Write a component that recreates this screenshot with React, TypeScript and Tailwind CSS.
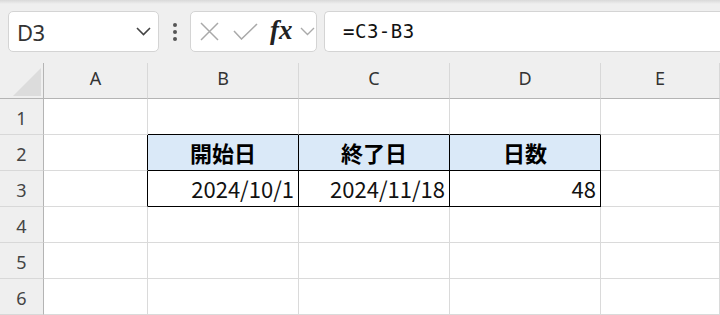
import React from "react";

const cols = ["A", "B", "C", "D", "E"];

function Corner() {
  return (
    <div className="h-[36px] border-r border-b border-r-[#b4b4b4] border-b-[#b4b4b4] bg-[#efefef] flex items-end justify-end pr-[2px] pb-[2px]">
      <svg width="28" height="28" viewBox="0 0 28 28">
        <polygon points="28,0 28,28 0,28" fill="#dcdcdc" />
      </svg>
    </div>
  );
}

export default function App() {
  const sans = { fontFamily: '"Noto Sans", "Open Sans", sans-serif' };
  const jp = { fontFamily: '"Noto Sans CJK JP", "Noto Sans", sans-serif' };

  const gridCell = "h-[36px] border-r border-b border-[#dadada] bg-white";

  return (
    <div className="w-[720px] h-[315px] overflow-hidden bg-[#efefef] flex flex-col" style={sans}>
      <div className="h-[4px] bg-gradient-to-b from-[#d9d9d9] to-[#efefef]" />
      {/* toolbar */}
      <div className="flex items-center pl-[8px] pt-[7px] h-[48px]">
        <div className="w-[151px] h-[41px] rounded-[5px] border border-[#d4d4d4] bg-white flex items-center justify-between pl-[8px] pr-[7px]">
          <span className="text-[22px] text-[#333] leading-none tracking-[-0.5px]">D3</span>
          <svg width="15" height="9" viewBox="0 0 15 9">
            <path d="M1 1 L7.5 7.5 L14 1" fill="none" stroke="#444" strokeWidth="1.6" />
          </svg>
        </div>
        <div className="w-[31px] flex flex-col items-center gap-[3px]">
          <div className="w-[4px] h-[4px] rounded-full bg-[#555]" />
          <div className="w-[4px] h-[4px] rounded-full bg-[#555]" />
          <div className="w-[4px] h-[4px] rounded-full bg-[#555]" />
        </div>
        <div className="w-[127px] h-[41px] rounded-[5px] border border-[#d4d4d4] bg-white flex items-center pl-[9px]">
          <svg width="19" height="19" viewBox="0 0 19 19">
            <path d="M1 1 L18 18 M18 1 L1 18" fill="none" stroke="#a9a9a9" strokeWidth="1.5" />
          </svg>
          <svg width="25" height="17" viewBox="0 0 25 17" className="ml-[14px]">
            <path d="M1 8 L8.5 16 L24 1" fill="none" stroke="#a9a9a9" strokeWidth="1.5" />
          </svg>
          <span
            className="ml-[12px] text-[27px] italic leading-none text-[#222] font-semibold -mt-[2px]"
            style={{ fontFamily: '"Liberation Serif", "DejaVu Serif", serif' }}
          >
            fx
          </span>
          <svg width="15" height="9" viewBox="0 0 15 9" className="ml-[7px]">
            <path d="M1 1 L7.5 7.5 L14 1" fill="none" stroke="#aaa" strokeWidth="1.4" />
          </svg>
        </div>
        <div className="ml-[7px] flex-1 h-[41px] rounded-l-[5px] border border-r-0 border-[#d4d4d4] bg-white flex items-center pl-[18px]">
          <span
            className="text-[19px] text-[#111] tracking-[0.5px]"
            style={{ fontFamily: '"DejaVu Sans Mono", "Liberation Mono", monospace' }}
          >
            =C3-B3
          </span>
        </div>
      </div>
      <div className="h-[11px]" />
      {/* grid */}
      <div className="grid grid-cols-[44px_104px_151px_151px_151px_1fr]">
        <Corner />
        {cols.map((c) => (
          <div
            key={c}
            className="h-[36px] border-r border-b border-r-[#d8d8d8] border-b-[#b4b4b4] bg-[#efefef] flex justify-center pt-[3px] text-[18px] leading-[24px] text-[#333]"
          >
            {c}
          </div>
        ))}

        {[1, 2, 3, 4, 5, 6].map((r) => (
          <React.Fragment key={r}>
            <div className="h-[36px] border-r border-b border-r-[#b4b4b4] border-b-[#d8d8d8] bg-[#efefef] flex items-center justify-center pt-[3px] text-[18px] text-[#444]">
              {r}
            </div>
            {r === 1 && (
              <>
                <div className={gridCell} />
                <div className="h-[36px] border-r border-b border-r-[#dadada] border-b-black bg-white" />
                <div className="h-[36px] border-r border-b border-r-[#dadada] border-b-black bg-white" />
                <div className="h-[36px] border-r border-b border-r-[#dadada] border-b-black bg-white" />
                <div className={gridCell} />
              </>
            )}
            {r === 2 && (
              <>
                <div className="h-[36px] border-r border-b border-r-black border-b-[#dadada] bg-white" />
                {["開始日", "終了日", "日数"].map((t) => (
                  <div
                    key={t}
                    className="h-[36px] border-r border-b border-black bg-[#dae9f8] flex items-center justify-center text-[22px] font-bold text-black"
                    style={jp}
                  >
                    {t}
                  </div>
                ))}
                <div className={gridCell} />
              </>
            )}
            {r === 3 && (
              <>
                <div className="h-[36px] border-r border-b border-r-black border-b-[#dadada] bg-white" />
                {["2024/10/1", "2024/11/18", "48"].map((t) => (
                  <div
                    key={t}
                    className="h-[36px] border-r border-b border-black bg-white flex items-center justify-end pr-[4px] text-[22px] font-normal text-[#111]"
                    style={jp}
                  >
                    {t}
                  </div>
                ))}
                <div className={gridCell} />
              </>
            )}
            {r > 3 && (
              <>
                <div className={gridCell} />
                <div className={gridCell} />
                <div className={gridCell} />
                <div className={gridCell} />
                <div className={gridCell} />
              </>
            )}
          </React.Fragment>
        ))}
      </div>
    </div>
  );
}
